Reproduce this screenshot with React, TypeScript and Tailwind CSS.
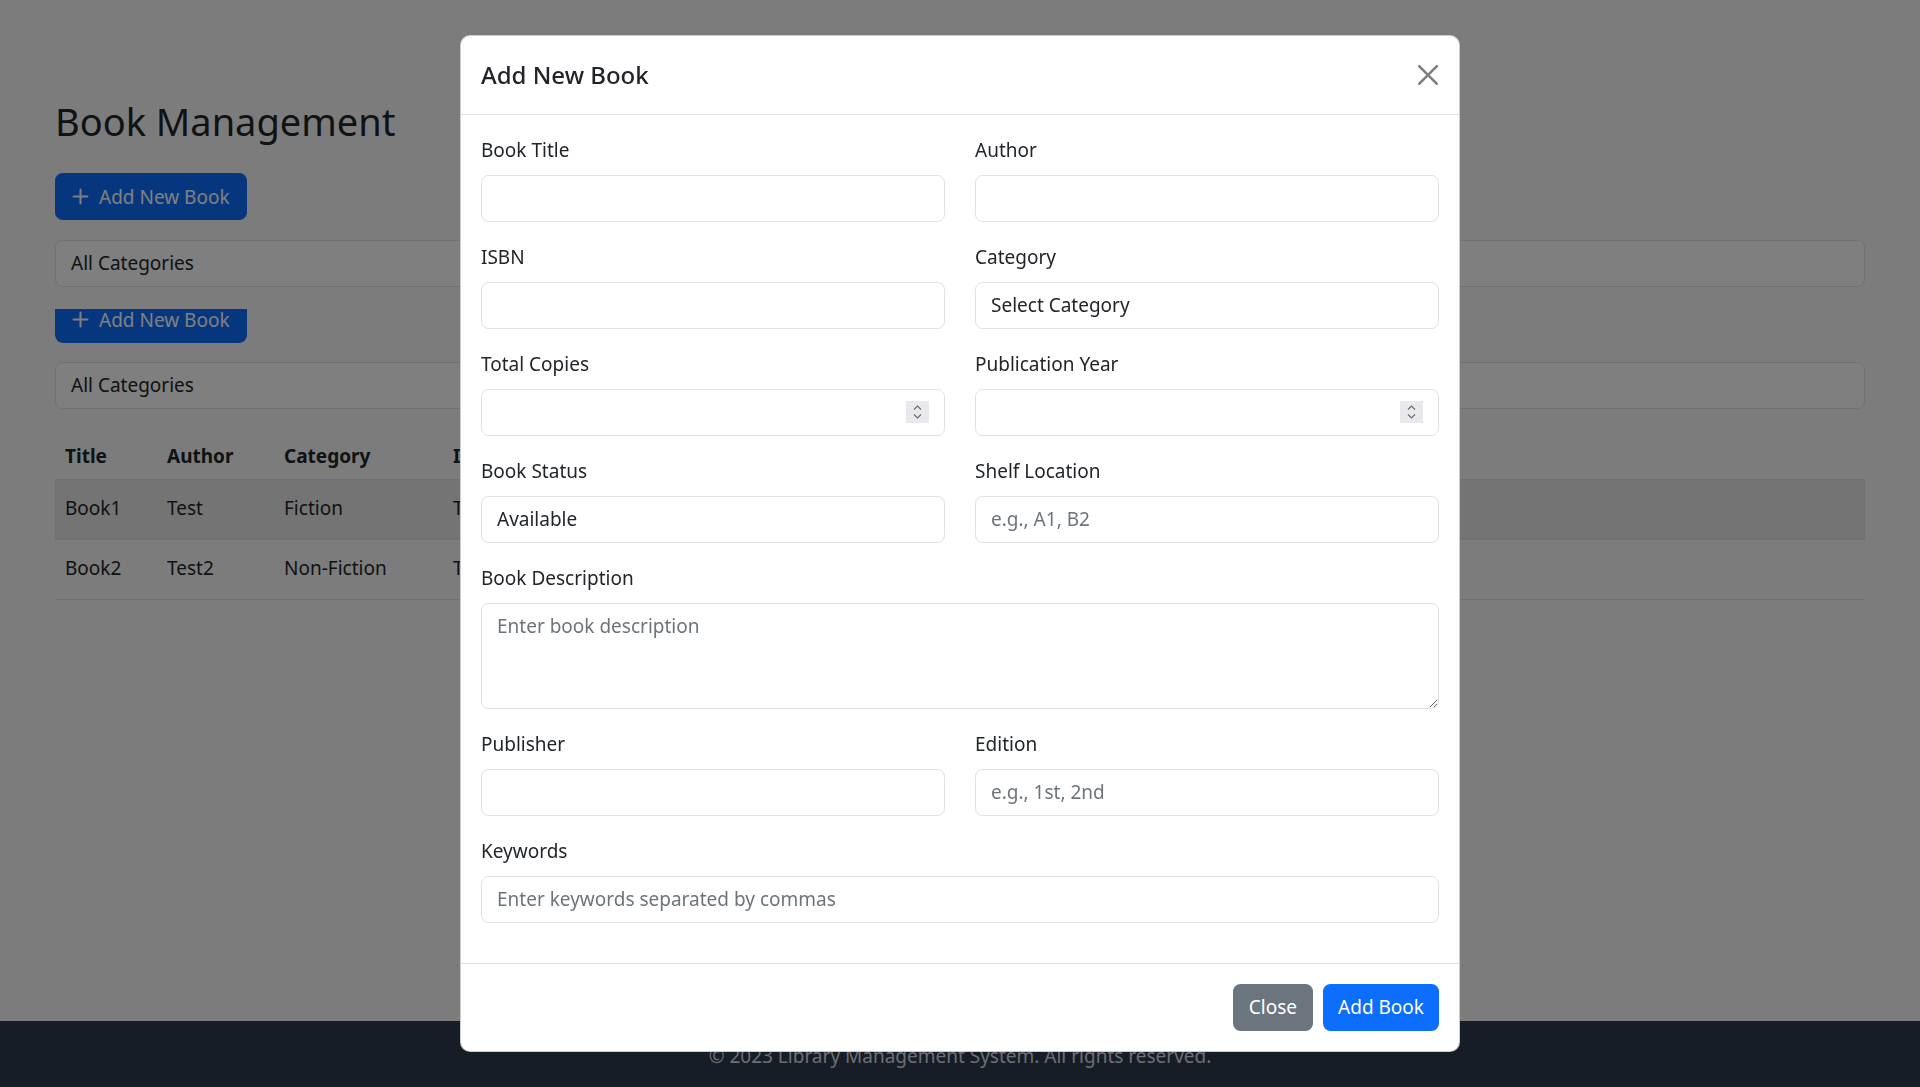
import React from 'react';

const books = [
  { title: 'Book1', author: 'Test', category: 'Fiction', isbn: 'T1', copies: 5, status: 'Available' },
  { title: 'Book2', author: 'Test2', category: 'Non-Fiction', isbn: 'T2', copies: 3, status: 'Available' },
];

function PlusIcon() {
  return (
    <svg width="17" height="17" viewBox="0 0 16 16" className="shrink-0">
      <path d="M8 1.5v13M1.5 8h13" stroke="currentColor" strokeWidth="1.9" strokeLinecap="round" />
    </svg>
  );
}

function AddButton() {
  return (
    <button
      type="button"
      className="flex items-center gap-[10px] h-[47px] w-[192px] px-[16px] rounded-[7.5px] bg-[#0d6efd] text-white text-[19px] leading-[30px] whitespace-nowrap border border-[#0d6efd]"
    >
      <PlusIcon />
      Add New Book
    </button>
  );
}

function CategorySelect() {
  return (
    <select className="appearance-none w-full h-[47px] px-[15px] rounded-[7.5px] border border-[#dee2e6] bg-white text-[19px] text-[#212529]">
      <option>All Categories</option>
    </select>
  );
}

function Label({ children }: { children: React.ReactNode }) {
  return <label className="block mb-[10px] text-[19px] leading-[30px] text-[#212529]">{children}</label>;
}

const inputCls =
  'block w-full h-[47px] px-[15px] rounded-[7.5px] border border-[#dee2e6] bg-white text-[19px] text-[#212529] placeholder:text-[#6c757d] outline-none';

function TextField({ label, placeholder }: { label: string; placeholder?: string }) {
  return (
    <div className="mb-[20px]">
      <Label>{label}</Label>
      <input type="text" className={inputCls} placeholder={placeholder} />
    </div>
  );
}

function NumberField({ label }: { label: string }) {
  return (
    <div className="mb-[20px]">
      <Label>{label}</Label>
      <div className="relative">
        <input type="text" className={inputCls} />
        {/* spinner buttons */}
        <span className="absolute right-[16px] top-1/2 -translate-y-1/2 w-[23px] h-[22px] bg-[#e9e9ed] flex items-center justify-center">
          <svg width="11" height="16" viewBox="0 0 11 16" fill="none" stroke="#6b6b70" strokeWidth="1.2">
            <path d="M2 5.5 5.5 2 9 5.5" />
            <path d="M2 10.5 5.5 14 9 10.5" />
          </svg>
        </span>
      </div>
    </div>
  );
}

function SelectField({ label, value }: { label: string; value: string }) {
  return (
    <div className="mb-[20px]">
      <Label>{label}</Label>
      <select className={'appearance-none ' + inputCls}>
        <option>{value}</option>
      </select>
    </div>
  );
}

function BookModal() {
  return (
    <div className="fixed inset-0 bg-black/50 flex justify-center items-start pt-[35px]">
      <div className="w-[1000px] bg-white rounded-[10px] border border-black/20 overflow-hidden">
        {/* header */}
        <div className="flex items-center justify-between px-[20px] py-[20px] border-b border-[#dee2e6]">
          <h5 className="text-[24px] leading-[37.5px] font-medium text-[#212529]">Add New Book</h5>
          <button type="button" className="w-[20px] h-[20px] mr-[1px] opacity-50" aria-label="Close">
            <svg width="20" height="20" viewBox="0 0 16 16" fill="#000">
              <path d="M.293.293a1 1 0 0 1 1.414 0L8 6.586 14.293.293a1 1 0 1 1 1.414 1.414L9.414 8l6.293 6.293a1 1 0 0 1-1.414 1.414L8 9.414l-6.293 6.293a1 1 0 0 1-1.414-1.414L6.586 8 .293 1.707a1 1 0 0 1 0-1.414z" />
            </svg>
          </button>
        </div>

        {/* body */}
        <div className="px-[20px] pt-[20px] pb-[20px]">
          <div className="grid grid-cols-2 gap-x-[30px]">
            <TextField label="Book Title" />
            <TextField label="Author" />
            <TextField label="ISBN" />
            <SelectField label="Category" value="Select Category" />
            <NumberField label="Total Copies" />
            <NumberField label="Publication Year" />
            <SelectField label="Book Status" value="Available" />
            <TextField label="Shelf Location" placeholder="e.g., A1, B2" />
          </div>
          <div className="mb-[20px]">
            <Label>Book Description</Label>
            <textarea
              className="block w-full h-[106px] px-[15px] py-[7px] rounded-[7.5px] border border-[#dee2e6] bg-white text-[19px] leading-[30px] text-[#212529] placeholder:text-[#6c757d] outline-none resize-y"
              placeholder="Enter book description"
            />
          </div>
          <div className="grid grid-cols-2 gap-x-[30px]">
            <TextField label="Publisher" />
            <TextField label="Edition" placeholder="e.g., 1st, 2nd" />
          </div>
          <TextField label="Keywords" placeholder="Enter keywords separated by commas" />
        </div>

        {/* footer */}
        <div className="flex justify-end gap-[10px] px-[20px] py-[20px] border-t border-[#dee2e6]">
          <button type="button" className="h-[47px] px-[16px] rounded-[7.5px] bg-[#6c757d] text-white text-[19px] leading-[30px]">
            Close
          </button>
          <button type="button" className="h-[47px] px-[15px] rounded-[7.5px] bg-[#0d6efd] text-white text-[19px] leading-[30px]">
            Add Book
          </button>
        </div>
      </div>
    </div>
  );
}

export default function App() {
  return (
    <div className="relative min-h-[1087px] flex flex-col bg-[#f8f9fa] text-[#212529] font-['Noto_Sans',sans-serif]">
      <main className="flex-1 px-[55px] pt-[97px]">
        <h2 className="text-[38px] leading-[48px] font-normal mb-[28px]">Book Management</h2>

        <AddButton />
        <div className="mt-[20px]">
          <CategorySelect />
        </div>

        {/* second toolbar, partly hidden under the filter above */}
        <div className="mt-[22px] h-[34px] w-[192px] overflow-hidden rounded-b-[7.5px]">
          <div className="-mt-[13px]">
            <AddButton />
          </div>
        </div>
        <div className="mt-[19px]">
          <CategorySelect />
        </div>

        <table className="w-full table-fixed border-collapse mt-[20px] text-[19px] leading-[30px]">
          <thead>
            <tr className="border-b border-[#dee2e6]">
              <th className="w-[102px] px-[10px] pt-[12px] pb-[8px] text-left font-bold">Title</th>
              <th className="w-[117px] px-[10px] pt-[12px] pb-[8px] text-left font-bold">Author</th>
              <th className="w-[169px] px-[10px] pt-[12px] pb-[8px] text-left font-bold">Category</th>
              <th className="w-[180px] px-[10px] pt-[12px] pb-[8px] text-left font-bold">ISBN</th>
              <th className="w-[140px] px-[10px] pt-[12px] pb-[8px] text-left font-bold">Copies</th>
              <th className="w-[150px] px-[10px] pt-[12px] pb-[8px] text-left font-bold">Status</th>
              <th className="px-[10px] pt-[12px] pb-[8px] text-left font-bold">Actions</th>
            </tr>
          </thead>
          <tbody>
            {books.map((b, i) => (
              <tr key={b.title} className={(i % 2 === 0 ? 'bg-[#e8e9ea] ' : '') + 'h-[60px] border-b border-[#dee2e6]'}>
                <td className="px-[10px] pb-[4px] align-middle">{b.title}</td>
                <td className="px-[10px] pb-[4px] align-middle">{b.author}</td>
                <td className="px-[10px] pb-[4px] align-middle">{b.category}</td>
                <td className="px-[10px] pb-[4px] align-middle">{b.isbn}</td>
                <td className="px-[10px] pb-[4px] align-middle">{b.copies}</td>
                <td className="px-[10px] pb-[4px] align-middle">{b.status}</td>
                <td className="px-[10px] align-middle">
                  <div className="flex gap-[6px]">
                    <button type="button" className="h-[38px] px-[10px] rounded-[5px] bg-[#ffc107] text-[17px]">Edit</button>
                    <button type="button" className="h-[38px] px-[10px] rounded-[5px] bg-[#dc3545] text-white text-[17px]">Delete</button>
                  </div>
                </td>
              </tr>
            ))}
          </tbody>
        </table>
      </main>

      <footer className="bg-[#2e3a4c] text-[#d8dde4] text-center text-[19px] leading-[30px] pt-[20px] pb-[16px]">
        © 2023 Library Management System. All rights reserved.
      </footer>

      <BookModal />
    </div>
  );
}
